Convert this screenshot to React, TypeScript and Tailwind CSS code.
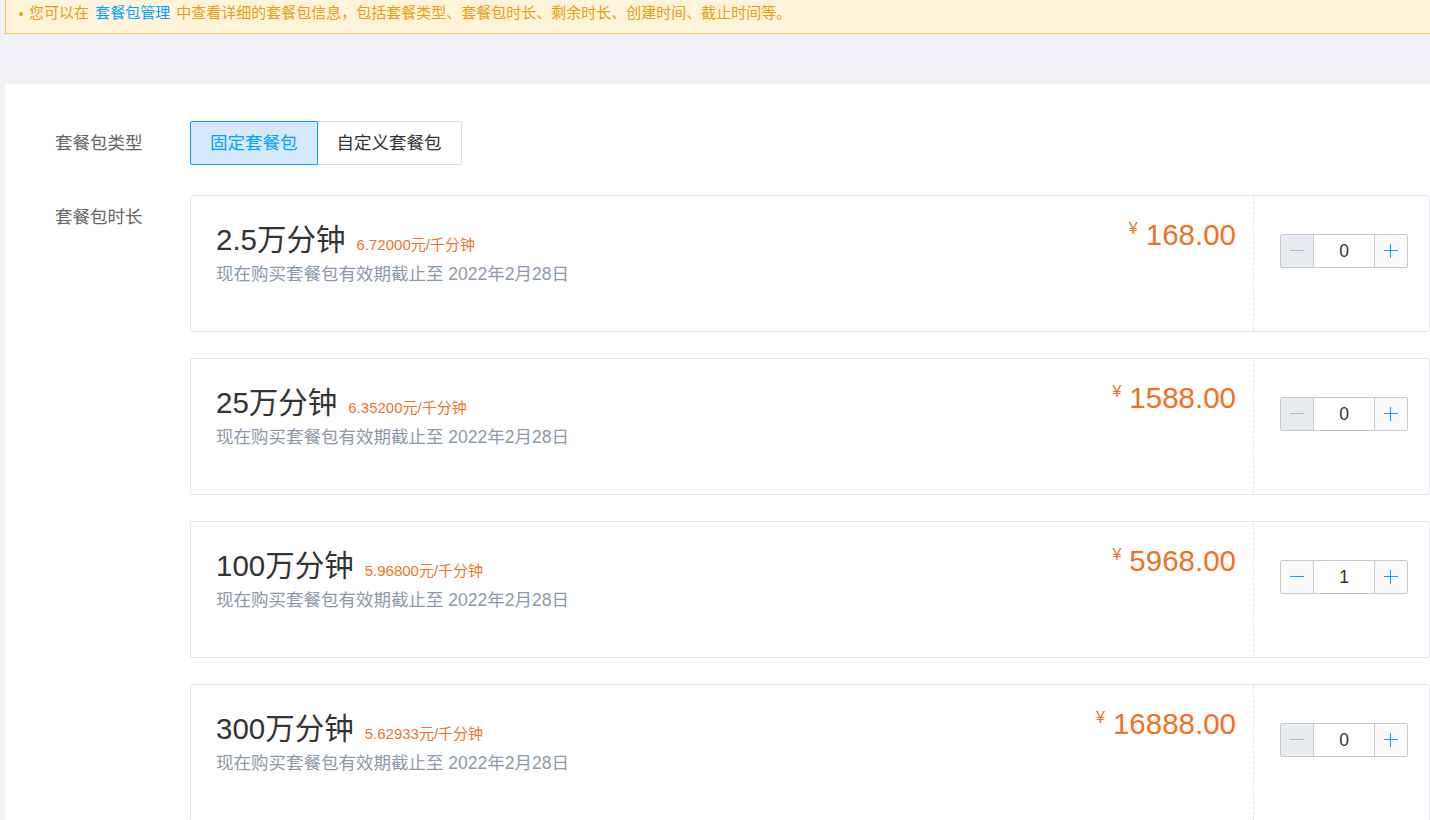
import React from "react";

const FONT = {
  fontFamily: '"Liberation Sans", "Noto Sans CJK SC", sans-serif',
};

type Pack = {
  title: string;
  unit: string;
  price: string;
  count: number;
};

function MinusIcon({ color }: { color: string }) {
  return (
    <svg width="16" height="16" viewBox="0 0 16 16">
      <line x1="1" y1="7.5" x2="15" y2="7.5" stroke={color} strokeWidth="1" />
    </svg>
  );
}

function PlusIcon({ color }: { color: string }) {
  return (
    <svg width="16" height="16" viewBox="0 0 16 16">
      <line x1="1" y1="7.5" x2="15" y2="7.5" stroke={color} strokeWidth="1" />
      <line x1="7.5" y1="1" x2="7.5" y2="15" stroke={color} strokeWidth="1" />
    </svg>
  );
}

function Stepper({ value }: { value: number }) {
  const disabled = value <= 0;
  return (
    <div className="flex h-[34px] w-[128px] rounded-[2px] border border-[#c5c9d1] overflow-hidden">
      <button
        className={
          "flex w-[33px] items-center justify-center border-r border-[#c5c9d1] " +
          (disabled ? "bg-[#e8ebef]" : "bg-[#fafafa]")
        }
      >
        <MinusIcon color={disabled ? "#b3b8c0" : "#00a4ff"} />
      </button>
      <div className="flex flex-1 items-center justify-center bg-white text-[17.5px] text-[#333]">
        {value}
      </div>
      <button className="flex w-[33px] items-center justify-center border-l border-[#c5c9d1] bg-[#fafafa]">
        <PlusIcon color="#00a4ff" />
      </button>
    </div>
  );
}

function PackCard({ pack }: { pack: Pack }) {
  return (
    <div className="flex h-[137px] rounded-[2px] border border-[#e4e7ed] bg-white">
      {/* info + price */}
      <div className="flex flex-1 justify-between pl-[25px] pr-[17px]">
        <div className="pt-[27px]">
          <div className="flex items-baseline gap-[11px]">
            <span className="text-[29.5px] leading-[34px] text-[#333]">{pack.title}</span>
            <span className="text-[15px] text-[#ef7428]">{pack.unit}</span>
          </div>
          <p className="mt-[5px] text-[17.5px] leading-[24px] text-[#8d99aa]">
            现在购买套餐包有效期截止至 2022年2月28日
          </p>
        </div>
        <div className="flex items-start pt-[22px] text-[#ef7222]">
          <span className="mt-[3px] mr-[8px] text-[16px] leading-[16px]">¥</span>
          <span className="text-[29.5px] leading-[34px]">{pack.price}</span>
        </div>
      </div>
      {/* stepper */}
      <div className="w-[176px] border-l border-dashed border-[#e0e3e8] pt-[38px] pl-[26px]">
        <Stepper value={pack.count} />
      </div>
    </div>
  );
}

export default function App() {
  const packs: Pack[] = [
    { title: "2.5万分钟", unit: "6.72000元/千分钟", price: "168.00", count: 0 },
    { title: "25万分钟", unit: "6.35200元/千分钟", price: "1588.00", count: 0 },
    { title: "100万分钟", unit: "5.96800元/千分钟", price: "5968.00", count: 1 },
    { title: "300万分钟", unit: "5.62933元/千分钟", price: "16888.00", count: 0 },
  ];

  return (
    <div style={FONT} className="h-[820px] w-[1430px] overflow-hidden bg-[#f0f1f5] pl-[5px]">
      {/* notice */}
      <div className="flex h-[34px] items-start border border-t-0 border-r-0 border-[#f6c76a] bg-[#fff4d9] pt-[3px] pl-[13px] text-[15px] leading-[20px] text-[#ea9c12]">
        <span className="mr-[6px] mt-[9px] h-[4px] w-[4px] rounded-full bg-[#ea9c12]" />
        <span>
          您可以在 <span className="px-[2px] text-[#00a4ff]">套餐包管理</span> 中查看详细的套餐包信息，包括套餐类型、套餐包时长、剩余时长、创建时间、截止时间等。
        </span>
      </div>

      {/* panel */}
      <div className="mt-[50px] h-full bg-white pt-[37px] pl-[50px]">
        {/* type row */}
        <div className="flex items-center">
          <div className="w-[135px] text-[17.5px] text-[#666]">套餐包类型</div>
          <div className="flex h-[44px]">
            <button className="rounded-l-[2px] border border-[#00a4ff] bg-[#d6e8fb] px-[19px] text-[17.5px] text-[#00a4ff]">
              固定套餐包
            </button>
            <button className="rounded-r-[2px] border border-l-0 border-[#dcdfe6] bg-white px-[19px] text-[17.5px] text-[#333]">
              自定义套餐包
            </button>
          </div>
        </div>

        {/* duration row */}
        <div className="mt-[30px] flex items-start">
          <div className="w-[135px] pt-[9px] text-[17.5px] text-[#666]">套餐包时长</div>
          <div className="flex flex-1 flex-col gap-[26px]">
            {packs.map((p, i) => (
              <PackCard key={i} pack={p} />
            ))}
          </div>
        </div>
      </div>
    </div>
  );
}
